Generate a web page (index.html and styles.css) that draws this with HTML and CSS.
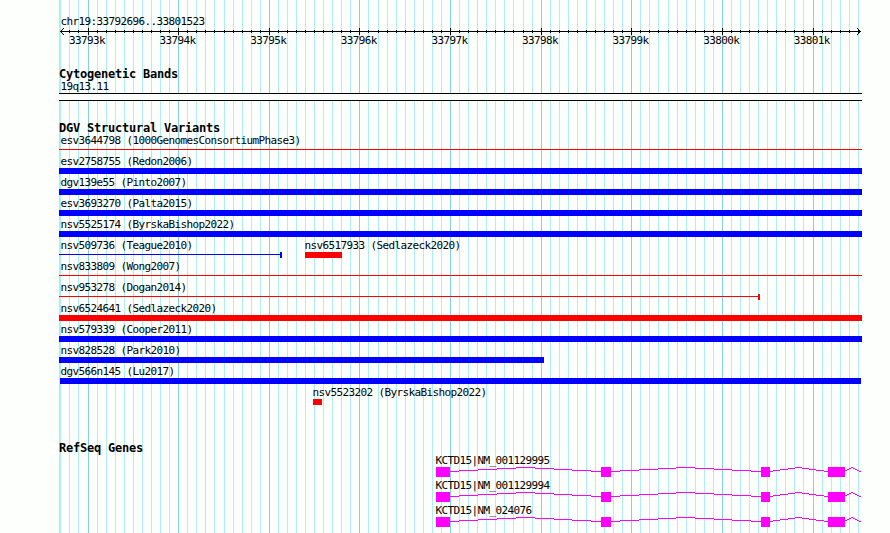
FILE: index.html
```
<!DOCTYPE html>
<html lang="en">
<head>
	<meta charset="utf-8">
	<title>chr19:33792696..33801523</title>
	<link rel="stylesheet" href="styles.css">
</head>
<body>
<div class="panel">
	<svg class="grid" width="803" height="533">
		<path class="first" d="M1 0V533"/>
		<path id="minor" class="minor"/>
		<path id="major" class="major"/>
	</svg>

	<div class="ruler">
		<div class="label">chr19:33792696..33801523</div>
		<svg class="axis" width="803" height="7">
			<path d="M1 3.5H802"/>
			<path id="ticks"/>
			<path d="M4.5 0V1M3.5 1V2M2.5 2V3M2.5 4V5M3.5 5V6M4.5 6V7"/>
			<path d="M798.5 0V1M799.5 1V2M800.5 2V3M800.5 4V5M799.5 5V6M798.5 6V7"/>
		</svg>
		<div class="numbers">
			<span>33793k</span><span>33794k</span><span>33795k</span><span>33796k</span><span>33797k</span><span>33798k</span><span>33799k</span><span>33800k</span><span>33801k</span>
		</div>
	</div>

	<div class="track cyto">
		<h2>Cytogenetic Bands</h2>
		<div class="label">19q13.11</div>
		<div class="band"></div>
	</div>

	<div class="track variants">
		<h2>DGV Structural Variants</h2>
		<div class="row"><div class="item"><div class="label">esv3644798 (1000GenomesConsortiumPhase3)</div><div class="line red"></div></div></div>
		<div class="row"><div class="item"><div class="label">esv2758755 (Redon2006)</div><div class="bar blue"></div></div></div>
		<div class="row"><div class="item"><div class="label">dgv139e55 (Pinto2007)</div><div class="bar blue"></div></div></div>
		<div class="row"><div class="item"><div class="label">esv3693270 (Palta2015)</div><div class="bar blue"></div></div></div>
		<div class="row"><div class="item"><div class="label">nsv5525174 (ByrskaBishop2022)</div><div class="bar blue"></div></div></div>
		<div class="row">
			<div class="item" style="width: 223px"><div class="label">nsv509736 (Teague2010)</div><div class="line blue capped"></div></div>
			<div class="item inner" style="width: 37px; margin-left: 23px"><div class="label">nsv6517933 (Sedlazeck2020)</div><div class="bar red"></div></div>
		</div>
		<div class="row"><div class="item"><div class="label">nsv833809 (Wong2007)</div><div class="line red"></div></div></div>
		<div class="row"><div class="item" style="width: 701px"><div class="label">nsv953278 (Dogan2014)</div><div class="line red capped"></div></div></div>
		<div class="row"><div class="item"><div class="label">nsv6524641 (Sedlazeck2020)</div><div class="bar red"></div></div></div>
		<div class="row"><div class="item"><div class="label">nsv579339 (Cooper2011)</div><div class="bar blue"></div></div></div>
		<div class="row"><div class="item" style="width: 485px"><div class="label">nsv828528 (Park2010)</div><div class="bar blue"></div></div></div>
		<div class="row"><div class="item inset" style="width: 801px; margin-left: 1px"><div class="label">dgv566n145 (Lu2017)</div><div class="bar blue"></div></div></div>
		<div class="row"><div class="item inner" style="width: 9px; margin-left: 254px"><div class="label">nsv5523202 (ByrskaBishop2022)</div><div class="bar red"></div></div></div>
	</div>

	<div class="track genes">
		<h2>RefSeq Genes</h2>
		<div class="gene">
			<div class="label">KCTD15|NM_001129995</div>
			<svg width="426" height="10">
				<g id="exons">
					<path class="intron" d="M14 4.5h9M23 3.5h19M42 2.5h19M61 1.5h19M80 .5h19M99 1.5h19M118 2.5h18M136 3.5h19M155 4.5h10M175 4.5h9M184 3.5h19M203 2.5h19M222 1.5h18M240 .5h19M259 1.5h19M278 2.5h18M296 3.5h19M315 4.5h10M334 4.5h3M337 3.5h7M344 2.5h8M352 1.5h7M359 .5h7M366 1.5h7M373 2.5h7M380 3.5h8M388 4.5h4M409 3.5h2M411 2.5h2M413 1.5h2M415 .5h2M417 1.5h2M419 2.5h2M421 3.5h2M423 4.5h2"/>
					<path class="exon" d="M0 0h14v10H0zM165 0h10v10h-10zM325 0h9v10h-9zM392 0h17v10h-17z"/>
				</g>
			</svg>
		</div>
		<div class="gene">
			<div class="label">KCTD15|NM_001129994</div>
			<svg width="426" height="10"><use href="#exons"/></svg>
		</div>
		<div class="gene">
			<div class="label">KCTD15|NM_024076</div>
			<svg width="426" height="10"><use href="#exons"/></svg>
		</div>
	</div>
</div>
<script src="grid.js"></script>
</body>
</html>
```
FILE: styles.css
```
body {
	margin: 0;
	background: #fdfffc;
	color: #000;
	font-family: "DejaVu Sans Mono", monospace;
	overflow: hidden;
}
svg {
	display: block;
	shape-rendering: crispEdges;
}
.panel {
	position: relative;
	width: 803px;
	height: 533px;
	margin-left: 59px;
}
/* vertical lines run behind all tracks */
.grid {
	position: absolute;
	top: 0;
	left: 0;
	z-index: -1;
}
.first { stroke: #afeeee; stroke-width: 2; }
.minor { stroke: #afeeee; }
.major { stroke: #87ceeb; }

.label {
	height: 13px;
	padding-left: 1.5px;
	font-size: 11px;
	line-height: 13px;
	letter-spacing: -0.622px;
	white-space: nowrap;
}
h2 {
	height: 13px;
	margin: 0;
	font-size: 12px;
	line-height: 15px;
	letter-spacing: -0.224px;
	white-space: nowrap;
}

.ruler { padding-top: 15px; }
.axis path { stroke: #000; }
.numbers {
	display: flex;
	gap: 54.6px;
	margin: -1px 0 0 10px;
	font-size: 11px;
	line-height: 13px;
	letter-spacing: -0.622px;
}
.numbers span { width: 36px; }

.cyto { padding-top: 20px; }
.band {
	box-sizing: border-box;
	height: 8px;
	border: solid #000;
	border-width: 1px 0;
	background: #fdfffc;
}

.variants { padding-top: 20px; }
.row {
	display: flex;
	height: 21px;
}
.item { width: 100%; }
.inner .label { padding-left: 0; text-indent: -0.5px; }
.inset .label { padding-left: 0.5px; }
.bar { height: 6px; }
.line {
	height: 1px;
	margin-top: 2px;
}
.blue { background: #00f; }
.red { background: #f00; }
.capped { position: relative; }
.capped::after {
	content: "";
	position: absolute;
	top: -2px;
	right: 0;
	width: 2px;
	height: 6px;
	background: inherit;
}

.genes { padding-top: 34px; }
.gene {
	height: 25px;
	margin-left: 377px;
}
.gene .label { padding-left: 0; text-indent: -0.6px; }
.intron { stroke: #f0f; }
.exon { fill: #f0f; }
```
FILE: grid.js
```
// one line per 100 bases, a darker one per 1000
var minor = "M10.5 0V533M19.5 0V533";
var ticks = "M10.5 2V5M19.5 2V5";
var major = "";
for (var i = 0; i <= 85; i++) {
	var x = Math.floor(29.075 + i * 9.062) + 0.5;
	if (i % 10 === 0) {
		major += "M" + x + " 0V533";
		ticks += "M" + x + " 0V7";
	} else {
		minor += "M" + x + " 0V533";
		ticks += "M" + x + " 2V5";
	}
}
document.getElementById("minor").setAttribute("d", minor);
document.getElementById("major").setAttribute("d", major);
document.getElementById("ticks").setAttribute("d", ticks);
```
